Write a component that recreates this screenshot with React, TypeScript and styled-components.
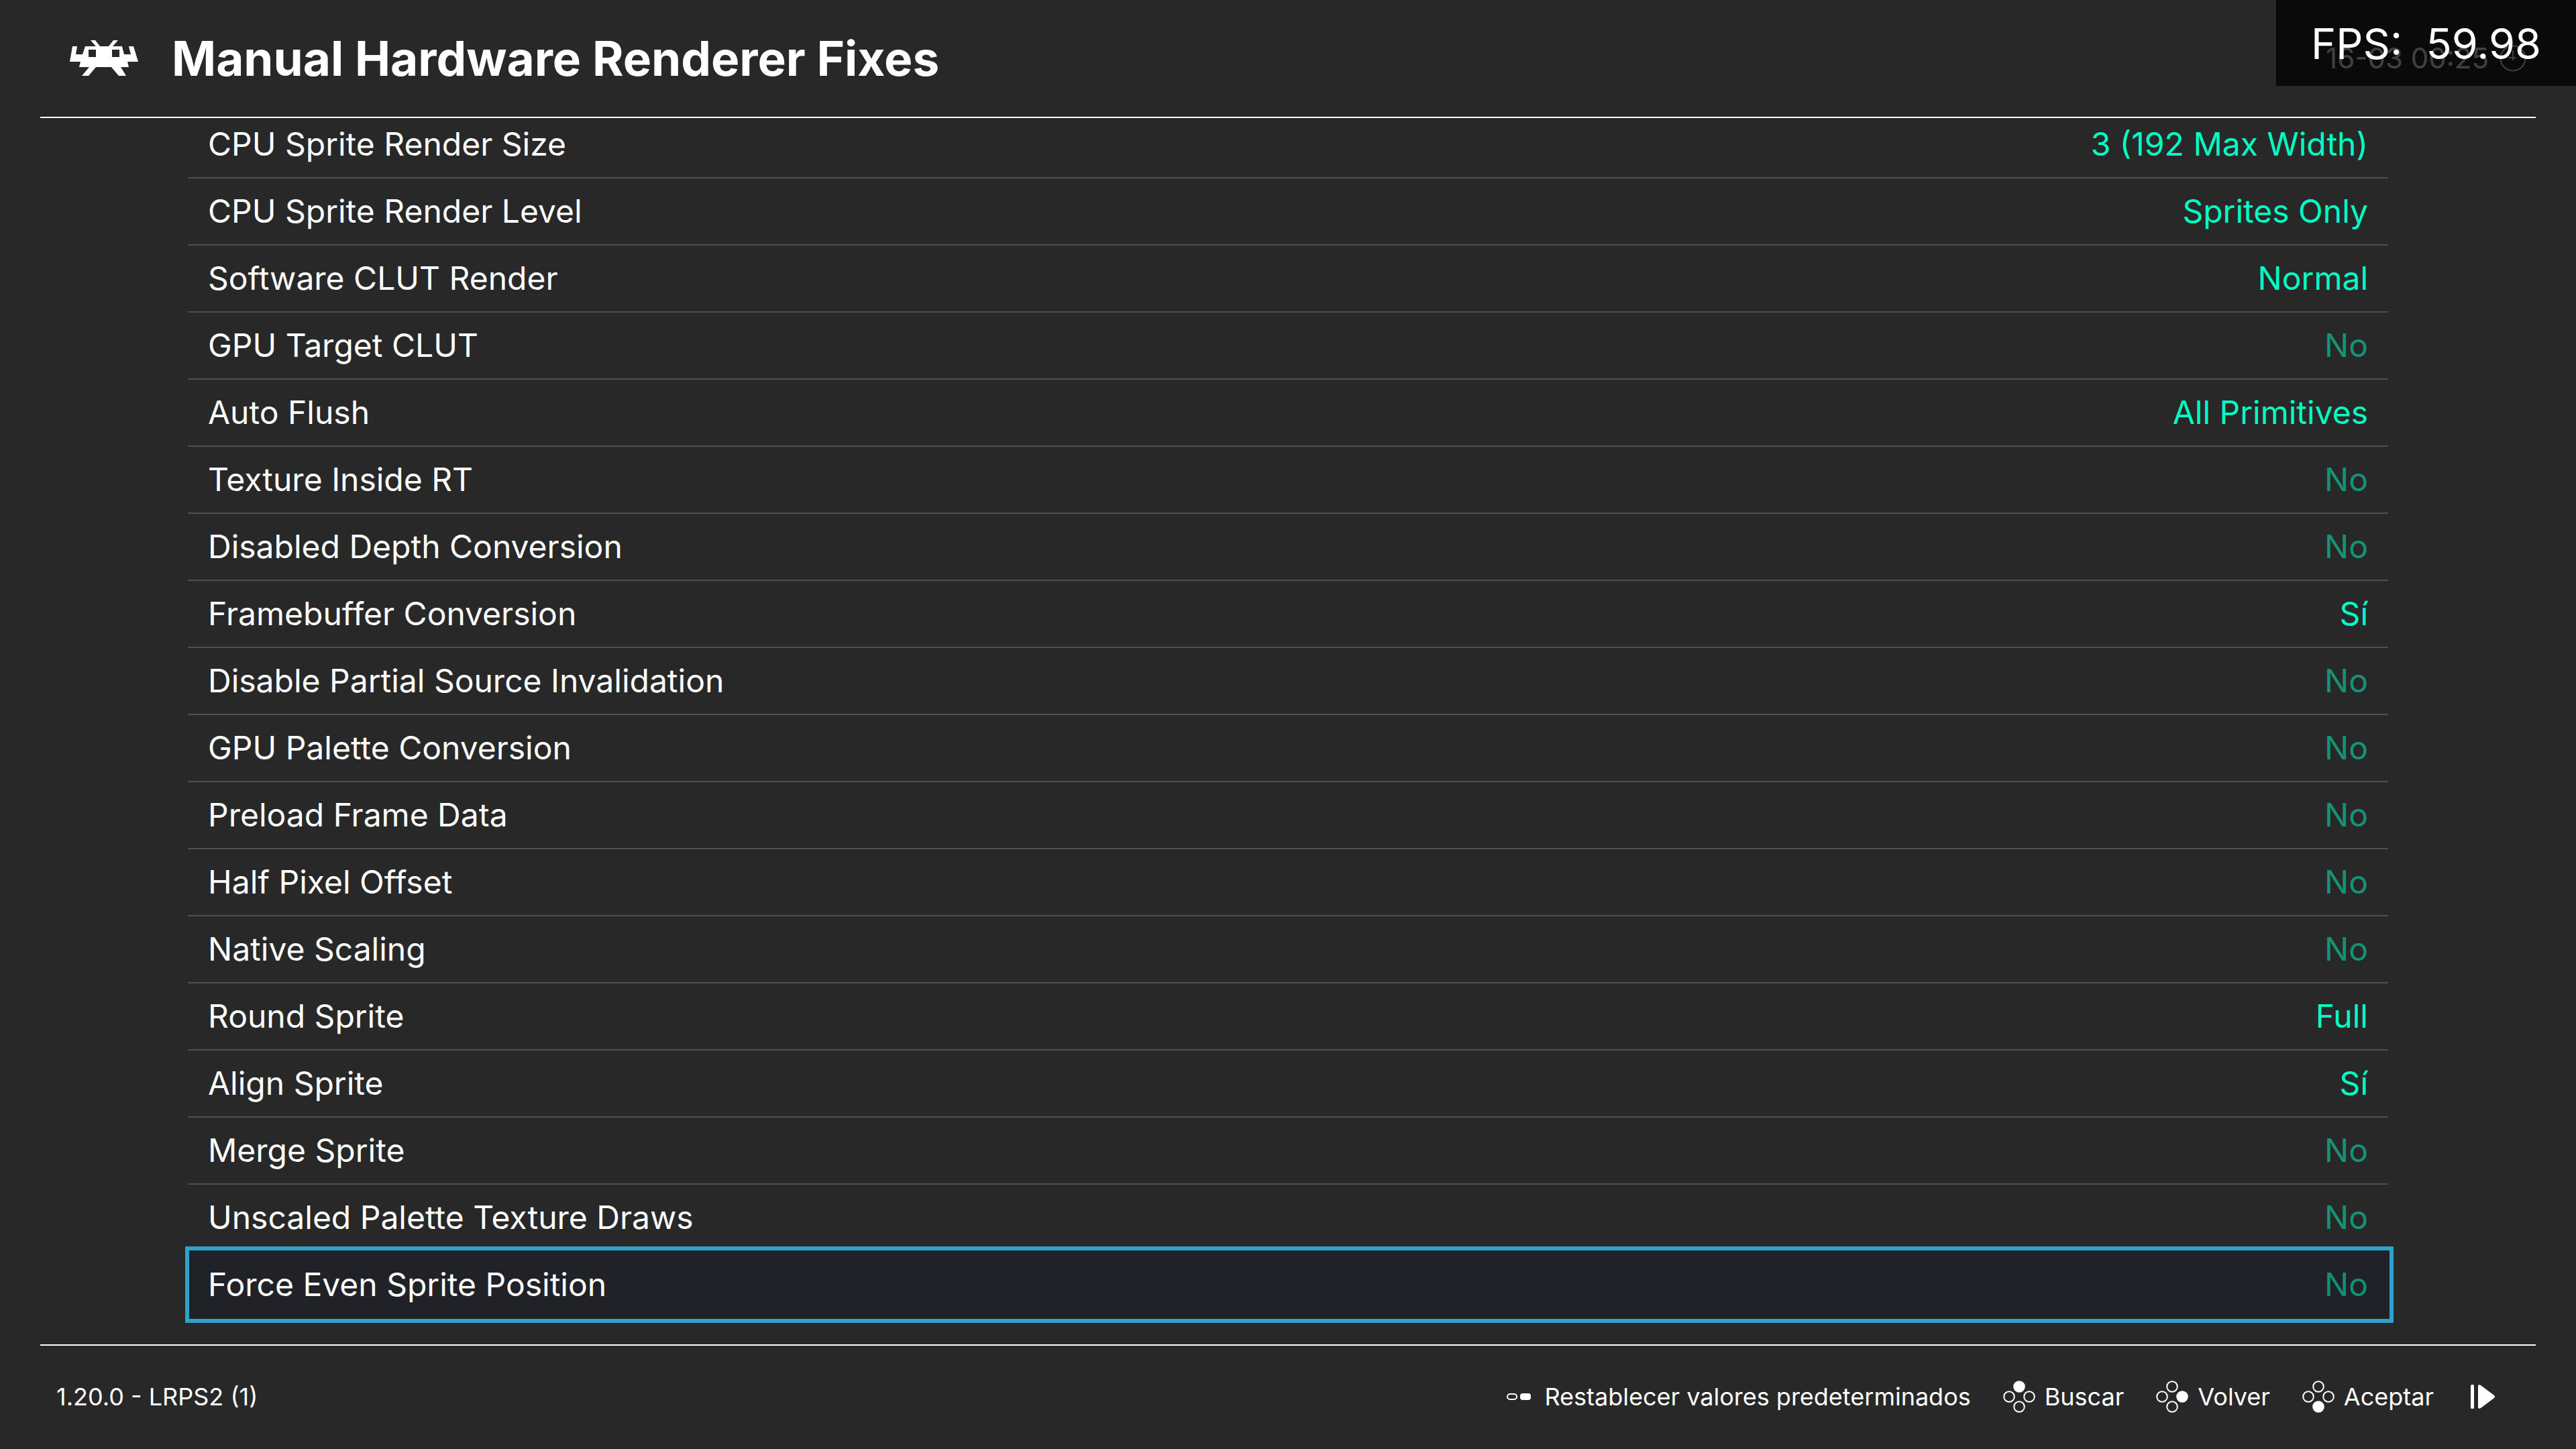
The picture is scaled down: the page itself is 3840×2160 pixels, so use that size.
import React from 'react';
import styled, { createGlobalStyle } from 'styled-components';

const GlobalStyle = createGlobalStyle`
  *, *::before, *::after { box-sizing: border-box; }
  body { margin: 0; background: #282828; }
`;

const Screen = styled.div`
  position: relative;
  display: flex;
  flex-direction: column;
  height: 100vh;
  padding: 0 60px;
  overflow: hidden;
  background: #282828;
  color: #fff;
  font-family: Inter, Roboto, sans-serif;
  font-size: 48px;
  line-height: 60px;
`;

const Header = styled.header`
  display: flex;
  flex: none;
  align-items: center;
  height: 176px;
  padding: 0 14px 0 44px;
  border-bottom: 2px solid #fff;
`;

const Title = styled.h1`
  margin: 0 auto 0 50px;
  font-size: 71px;
  font-weight: 700;
  line-height: 88px;
`;

const Clock = styled.time`
  display: flex;
  align-items: center;
  gap: 16px;
  font-size: 42px;
`;

const FpsCounter = styled.output`
  position: absolute;
  top: 0;
  right: 0;
  padding: 25px 52px 23px;
  background: rgba(0, 0, 0, 0.75);
  font-size: 63px;
  line-height: 80px;
  white-space: pre;
`;

const Main = styled.main`
  display: flex;
  flex: 1;
  flex-direction: column;
  justify-content: flex-end;
  min-height: 0;
  padding: 0 220px 32px;
  overflow: hidden;
`;

const OptionList = styled.ul`
  margin: 0;
  padding: 0;
  list-style: none;
`;

const OptionItem = styled.li`
  display: flex;
`;

const OptionRow = styled.button<{ $selected: boolean }>`
  display: flex;
  align-items: center;
  justify-content: space-between;
  width: ${p => (p.$selected ? 'calc(100% + 12px)' : '100%')};
  height: ${p => (p.$selected ? '114px' : '100px')};
  margin: ${p => (p.$selected ? '-8px -8px 0 -4px' : '0')};
  padding: ${p => (p.$selected ? '0 32px 0 28px' : '0 30px')};
  border: 0 solid #4f4f4f;
  border-width: 0 0 2px;
  ${p => p.$selected && 'position: relative; border: 6px solid #2da3cb;'}
  background: ${p => (p.$selected ? '#212227' : 'transparent')};
  color: inherit;
  font: inherit;
  text-align: left;
`;

const Value = styled.span<{ $off: boolean }>`
  color: ${p => (p.$off ? 'rgba(0, 255, 197, 0.5)' : '#00ffc5')};
`;

const Footer = styled.footer`
  display: flex;
  flex: none;
  align-items: center;
  justify-content: space-between;
  height: 156px;
  padding: 0 60px 2px 24px;
  border-top: 2px solid #fff;
  font-size: 36px;
  line-height: 44px;
`;

const Hints = styled.nav`
  display: flex;
  align-items: center;
  gap: 48px;
`;

const Hint = styled.button<{ $gap?: number }>`
  display: flex;
  align-items: center;
  gap: ${p => p.$gap ?? 14}px;
  padding: 0;
  border: 0;
  background: none;
  color: inherit;
  font: inherit;
`;

const InvaderLogo = () => (
  <svg width="102" height="54" viewBox="0 0 102 54" fill="#fff" aria-hidden="true">
    <path
      fillRule="evenodd"
      d="M31 0h7l7 9h13l7-9h7l-8 9h14l3 12h10L88 9h7l7 23H86l2 8H76L84 53H73L62 40H39L28 53H18L29 40H14l2-8H0L4 9h7L9 21h10l4-12h16zM28 14v11h11V14zM63 14v11h11V14z"
    />
  </svg>
);

const ClockIcon = () => (
  <svg width="40" height="40" viewBox="0 0 40 40" fill="none" stroke="#fff" strokeWidth="2" aria-hidden="true">
    <circle cx="20" cy="20" r="18.5" />
    <path d="M20 8v15M14 19h11" />
  </svg>
);

const SelectIcon = () => (
  <svg width="36" height="10" viewBox="0 0 36 10" aria-hidden="true">
    <rect x="1" y="1" width="14" height="8" rx="4" fill="none" stroke="#fff" strokeWidth="2" />
    <rect x="20" width="16" height="10" rx="4" fill="#fff" />
  </svg>
);

const PAD_BUTTONS = {
  top: [24, 9],
  left: [9, 24],
  right: [39, 24],
  bottom: [24, 39],
};

type PadButton = keyof typeof PAD_BUTTONS;

const PadIcon = ({ pressed }: { pressed: PadButton }) => (
  <svg width="48" height="48" viewBox="0 0 48 48" stroke="#fff" strokeWidth="2" aria-hidden="true">
    {(Object.keys(PAD_BUTTONS) as PadButton[]).map(name => (
      <circle
        key={name}
        cx={PAD_BUTTONS[name][0]}
        cy={PAD_BUTTONS[name][1]}
        r="7.8"
        fill={name === pressed ? '#fff' : 'none'}
      />
    ))}
  </svg>
);

const ResumeIcon = () => (
  <svg width="44" height="36" viewBox="-6 0 44 36" fill="#fff" aria-hidden="true">
    <rect x="1" y="0" width="5" height="36" rx="2" />
    <path d="M12 2q0-3 4-1l20 15q2 2 0 4L16 35q-4 2-4-1z" />
  </svg>
);

const OPTIONS: [string, string][] = [
  ['CPU Sprite Render Size', '3 (192 Max Width)'],
  ['CPU Sprite Render Level', 'Sprites Only'],
  ['Software CLUT Render', 'Normal'],
  ['GPU Target CLUT', 'No'],
  ['Auto Flush', 'All Primitives'],
  ['Texture Inside RT', 'No'],
  ['Disabled Depth Conversion', 'No'],
  ['Framebuffer Conversion', 'Sí'],
  ['Disable Partial Source Invalidation', 'No'],
  ['GPU Palette Conversion', 'No'],
  ['Preload Frame Data', 'No'],
  ['Half Pixel Offset', 'No'],
  ['Native Scaling', 'No'],
  ['Round Sprite', 'Full'],
  ['Align Sprite', 'Sí'],
  ['Merge Sprite', 'No'],
  ['Unscaled Palette Texture Draws', 'No'],
  ['Force Even Sprite Position', 'No'],
];

const SELECTED = 'Force Even Sprite Position';

export default function App() {
  return (
    <Screen>
      <GlobalStyle />
      <Header>
        <InvaderLogo />
        <Title>Manual Hardware Renderer Fixes</Title>
        <Clock>
          16-03 00:25
          <ClockIcon />
        </Clock>
      </Header>
      <Main>
        <OptionList>
          {OPTIONS.map(([label, value]) => (
            <OptionItem key={label}>
              <OptionRow type="button" $selected={label === SELECTED}>
                <span>{label}</span>
                <Value $off={value === 'No'}>{value}</Value>
              </OptionRow>
            </OptionItem>
          ))}
        </OptionList>
      </Main>
      <Footer>
        <span>1.20.0 - LRPS2 (1)</span>
        <Hints>
          <Hint type="button" $gap={20}>
            <SelectIcon />
            Restablecer valores predeterminados
          </Hint>
          <Hint type="button">
            <PadIcon pressed="top" />
            Buscar
          </Hint>
          <Hint type="button">
            <PadIcon pressed="right" />
            Volver
          </Hint>
          <Hint type="button">
            <PadIcon pressed="bottom" />
            Aceptar
          </Hint>
          <Hint type="button" aria-label="Reanudar">
            <ResumeIcon />
          </Hint>
        </Hints>
      </Footer>
      <FpsCounter>FPS:  59.98</FpsCounter>
    </Screen>
  );
}
